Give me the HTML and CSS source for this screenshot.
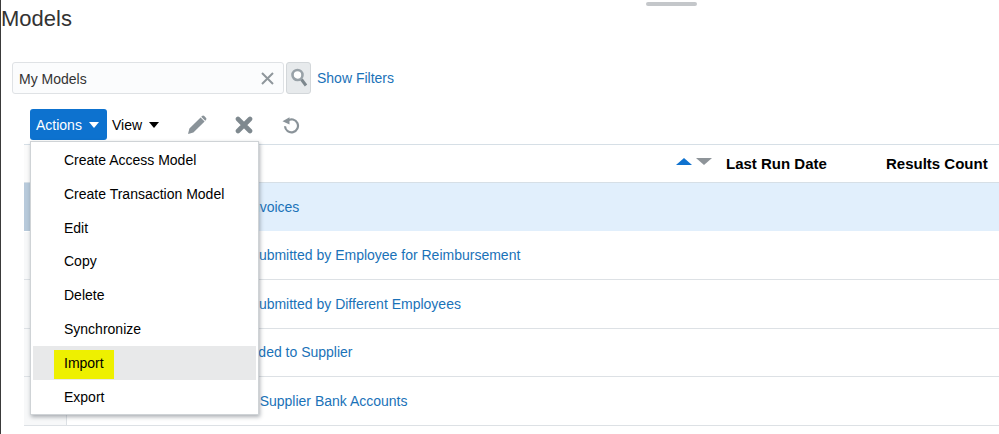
FILE: index.html
```html
<!DOCTYPE html>
<html lang="en">
<head>
<meta charset="utf-8">
<title>Models</title>
<link rel="stylesheet" href="styles.css">
</head>
<body>
<div class="page">
  <div class="splitter"></div>
  <h1 class="title">Models</h1>
  <div class="search-row">
    <div class="search-box">
      <span class="search-value">My Models</span>
      <svg class="clear" width="13" height="13" viewBox="0 0 13 13"><path d="M1 1l11 11M12 1L1 12" stroke="#8f979c" stroke-width="2" fill="none"/></svg>
    </div>
    <button class="search-btn" type="button" aria-label="Search">
      <svg width="18" height="22" viewBox="0 0 18 22"><circle cx="7.5" cy="8" r="5" fill="#fff" stroke="#99a2a8" stroke-width="2.6"/><path d="M11.5 12.5l4.5 6" stroke="#7d878d" stroke-width="3" fill="none"/></svg>
    </button>
    <a class="link filters" href="#">Show Filters</a>
  </div>
  <div class="toolbar">
    <button class="actions" type="button">Actions<span class="caret white"></span></button>
    <span class="view">View<span class="caret black"></span></span>
    <svg class="tool pencil" width="20" height="20" viewBox="0 0 20 20"><path d="M1 19l1.4-5.4L13.6 2.4l4 4L6.4 17.6zM14.8 1.2c.8-.8 1.8-.8 2.5-.1l1.6 1.6c.7.7.7 1.7-.1 2.5l-.6.6-4-4z" fill="#8a9399"/></svg>
    <svg class="tool cross" width="18" height="18" viewBox="0 0 18 18"><path d="M3 3l12 12M15 3L3 15" stroke="#7f898f" stroke-width="4.6" stroke-linecap="round" fill="none"/></svg>
    <svg class="tool undo" width="18" height="18" viewBox="0 0 18 18"><path d="M5.6 4.6a6.5 6.5 0 1 1-2.6 5.6" stroke="#8a9399" stroke-width="2.2" fill="none"/><path d="M0.5 5.2L7.5 1.2v7.4z" fill="#8a9399"/></svg>
  </div>
  <div class="table">
    <div class="row head">
      <div class="gutter"></div>
      <div class="cell name sort">
        <span class="tri up"></span><span class="tri down"></span>
      </div>
      <div class="cell date">Last Run Date</div>
      <div class="cell count">Results Count</div>
    </div>
    <div class="row selected">
      <div class="gutter"></div>
      <div class="cell name"><a class="link" href="#">Expense Reports Matching Invoices</a></div>
      <div class="cell date"></div><div class="cell count"></div>
    </div>
    <div class="row">
      <div class="gutter"></div>
      <div class="cell name"><a class="link" href="#">Duplicate Expense Reports Submitted by Employee for Reimbursement</a></div>
      <div class="cell date"></div><div class="cell count"></div>
    </div>
    <div class="row">
      <div class="gutter"></div>
      <div class="cell name"><a class="link" href="#">Duplicate Expense Reports Submitted by Different Employees</a></div>
      <div class="cell date"></div><div class="cell count"></div>
    </div>
    <div class="row">
      <div class="gutter"></div>
      <div class="cell name"><a class="link" href="#">Duplicate Amount Was Refunded to Supplier</a></div>
      <div class="cell date"></div><div class="cell count"></div>
    </div>
    <div class="row">
      <div class="gutter"></div>
      <div class="cell name"><a class="link" href="#">Payments to Employees with Supplier Bank Accounts</a></div>
      <div class="cell date"></div><div class="cell count"></div>
    </div>
  </div>
  <ul class="menu">
    <li class="item">Create Access Model</li>
    <li class="item">Create Transaction Model</li>
    <li class="item">Edit</li>
    <li class="item">Copy</li>
    <li class="item">Delete</li>
    <li class="item">Synchronize</li>
    <li class="item hover"><span class="mark">Import</span></li>
    <li class="item">Export</li>
  </ul>
</div>
</body>
</html>
```

FILE: styles.css
```css
* { box-sizing: border-box; }
html, body { margin: 0; padding: 0; height: 100%; overflow: hidden; background: #fff; }
body { font-family: "Liberation Sans", Arial, sans-serif; font-size: 14px; color: #000; }

.page { position: relative; height: 434px; border-left: 1px solid #3a3a3a; }

.splitter { position: absolute; left: 645px; top: 2px; width: 51px; height: 4px; border-radius: 2px; background: #c4c7ca; }

.title { margin: 0; padding: 6px 0 0; height: 62px; font-size: 22px; line-height: 26px; font-weight: 400; color: #333; }

.link { color: #1a72b8; text-decoration: none; }

.search-row { display: flex; align-items: center; height: 32px; margin-left: 11px; }
.search-box { display: flex; align-items: center; justify-content: space-between; width: 272px; height: 32px; padding: 1px 9px 0 6px; background: #fbfcfd; border: 1px solid #dfe2e5; border-radius: 3px; }
.search-value { color: #333; }
.search-btn { display: flex; align-items: center; justify-content: center; width: 25px; height: 32px; margin-left: 2px; padding: 0; background: #e7eaec; border: 1px solid #d3d7da; border-radius: 3px; }
.filters { margin-left: 6px; margin-top: -1px; }

.toolbar { display: flex; align-items: center; height: 31px; margin: 15px 0 0 29px; }
.actions { display: flex; align-items: center; width: 77px; height: 31px; padding: 0 0 0 6px; background: #0d72cf; color: #fff; border: 0; border-radius: 3px; font: inherit; }
.view { display: flex; align-items: center; margin-left: 5px; }
.caret { display: inline-block; width: 0; height: 0; margin-left: 7px; border-left: 5.5px solid transparent; border-right: 5.5px solid transparent; border-top: 6px solid #000; }
.caret.white { border-top-color: #fff; }
.tool { display: block; }
.pencil { margin-left: 28px; }
.cross { margin-left: 28px; }
.undo { margin-left: 29px; }

.table { margin: 4px 0 0 23px; border-top: 1px solid #d6dfe6; }
.row { display: grid; grid-template-columns: 43px 653px 160px 1fr; height: 48.5px; border-bottom: 1px solid #dde1e5; align-items: center; }
.row.head { height: 38px; border-bottom-color: #d6dfe6; font-size: 15px; font-weight: 700; }
.row.selected { background: #e1effc; border-bottom-color: #fff; }
.gutter { height: 100%; background: #f7f8f9; border-right: 1px solid #dde1e5; }
.selected .gutter { background: #b8cadb; border-right: 0; }
.head .gutter { background: #fbfbfb; }
.cell { padding-left: 6px; white-space: nowrap; }
.name { padding-left: 9px; }
.sort { display: flex; align-items: center; justify-content: flex-end; gap: 4px; padding-right: 8px; margin-top: -4px; }
.tri { width: 0; height: 0; border-left: 8px solid transparent; border-right: 8px solid transparent; }
.tri.up { border-bottom: 7px solid #0f72cf; }
.tri.down { border-top: 7px solid #8e9499; }

.menu { position: absolute; left: 29px; top: 141px; width: 229px; height: 274px; margin: 0; padding: 2px 2px 0; list-style: none; background: #fff; border: 1px solid #cfd3d6; box-shadow: 1px 2px 4px rgba(70, 80, 90, .45); }
.item { height: 33.8px; line-height: 33.8px; padding-left: 31px; }
.item.hover { background: #e8e9ea; padding-left: 21px; margin: -1px 0 1px; }
.mark { display: inline-block; height: 29px; line-height: 26px; padding: 0 10px; margin-top: 4px; background: #eef000; vertical-align: top; }
```
